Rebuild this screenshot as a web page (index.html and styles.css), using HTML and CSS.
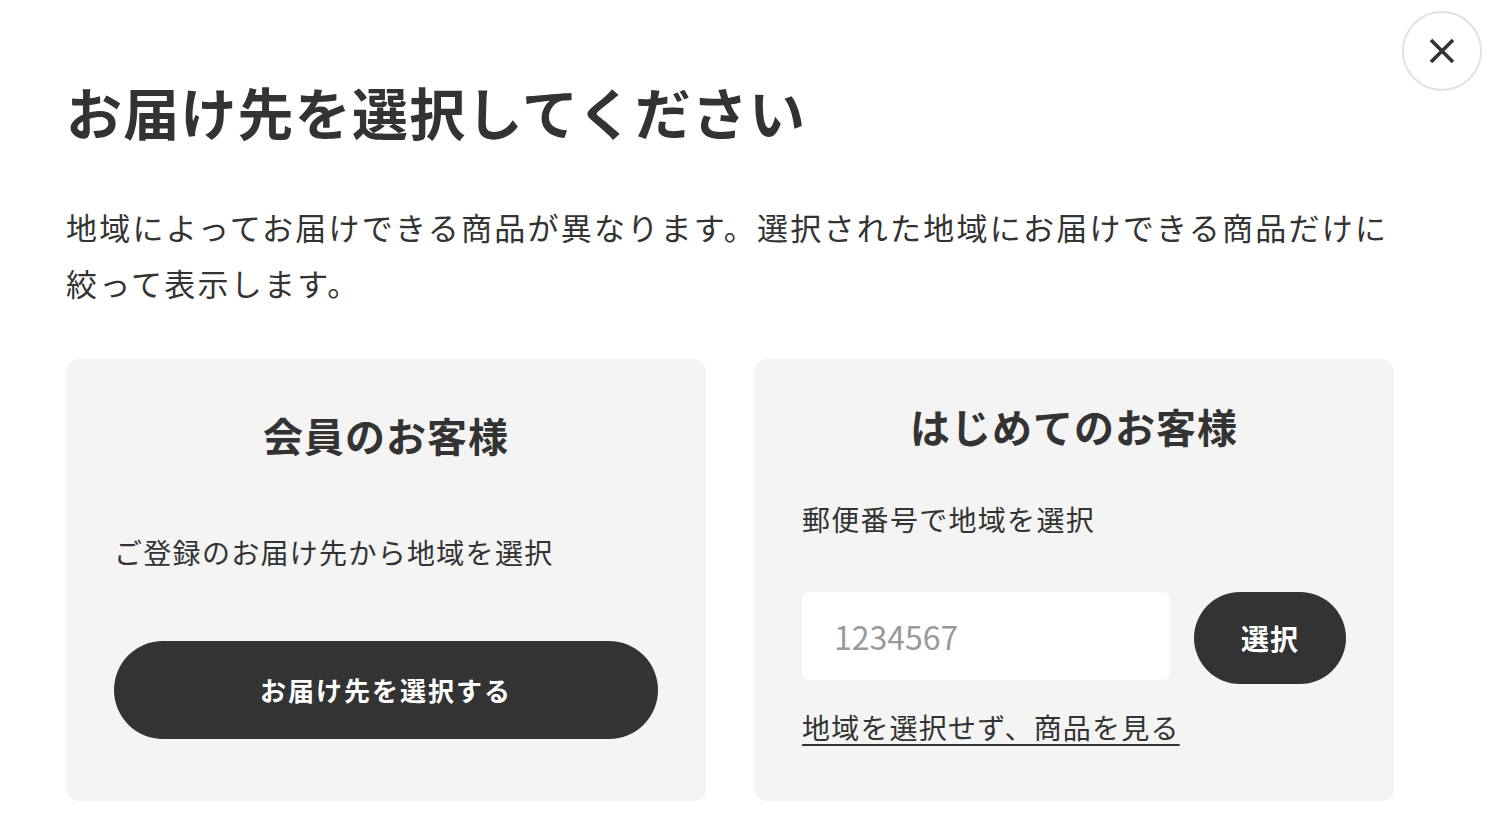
FILE: index.html
```html
<!DOCTYPE html>
<html lang="ja">
<head>
<meta charset="utf-8">
<title>お届け先を選択してください</title>
<link rel="stylesheet" href="styles.css">
</head>
<body>
<div class="modal">
  <button class="close" type="button" aria-label="閉じる">
    <svg viewBox="0 0 26 26" width="26" height="26" aria-hidden="true"><path d="M2 2L24 24M24 2L2 24" stroke="#333" stroke-width="3.6" fill="none"/></svg>
  </button>
  <h1 class="title">お届け先を選択してください</h1>
  <p class="lead">地域によってお届けできる商品が異なります。選択された地域にお届けできる商品だけに絞って表示します。</p>
  <div class="cards">
    <section class="card">
      <h2 class="card-title card-title--member">会員のお客様</h2>
      <p class="card-text card-text--member">ご登録のお届け先から地域を選択</p>
      <button class="btn-primary" type="button">お届け先を選択する</button>
    </section>
    <section class="card">
      <h2 class="card-title card-title--guest">はじめてのお客様</h2>
      <p class="card-text card-text--guest">郵便番号で地域を選択</p>
      <div class="zip-row">
        <input class="zip-input" type="text" placeholder="1234567">
        <button class="btn-select" type="button">選択</button>
      </div>
      <a class="skip-link" href="#">地域を選択せず、商品を見る</a>
    </section>
  </div>
</div>
</body>
</html>
```

FILE: styles.css
```css
html, body {
  margin: 0;
  padding: 0;
  background: #fff;
}
body {
  font-family: "Noto Sans CJK JP", "Noto Sans", sans-serif;
  color: #333;
}
.modal {
  position: relative;
  width: 1328px;
  padding: 72px 0 24px 66px;
}
.close {
  position: absolute;
  top: 11px;
  left: 1402px;
  width: 80px;
  height: 80px;
  border: 2px solid #e2e2e2;
  border-radius: 50%;
  background: #fff;
  display: flex;
  align-items: center;
  justify-content: center;
  padding: 0;
  cursor: pointer;
}
.close svg { display: block; }
.title {
  margin: 0 0 49px;
  font-size: 56px;
  line-height: 78px;
  font-weight: 700;
  letter-spacing: 1.2px;
}
.lead {
  width: 1340px;
  margin: 0 0 48px;
  font-size: 31px;
  line-height: 56px;
  letter-spacing: 2.25px;
}
.cards {
  display: grid;
  grid-template-columns: 640px 640px;
  gap: 48px;
}
.card {
  background: #f4f4f4;
  border-radius: 12px;
  padding: 43px 48px 53px;
  display: flex;
  flex-direction: column;
  justify-content: center;
}
.card-title {
  margin: 0;
  font-size: 40px;
  line-height: 48px;
  font-weight: 700;
  letter-spacing: 1px;
  text-align: center;
}
.card-title--member { margin-bottom: 72px; }
.card-title--guest { margin-bottom: 48px; }
.card-text {
  margin: 0;
  font-size: 28px;
  line-height: 42px;
  letter-spacing: 1.3px;
}
.card-text--member { margin-bottom: 68px; }
.card-text--guest { margin-bottom: 52px; }
.btn-primary {
  width: 100%;
  height: 98px;
  border: none;
  border-radius: 49px;
  background: #333;
  color: #fff;
  font-family: inherit;
  font-size: 26px;
  font-weight: 700;
  letter-spacing: 2px;
  padding: 0 0 2px;
  cursor: pointer;
}
.zip-row {
  display: flex;
  align-items: flex-start;
  gap: 24px;
  margin-bottom: 22px;
}
.zip-input {
  width: 368px;
  height: 88px;
  box-sizing: border-box;
  border: none;
  border-radius: 8px;
  background: #fff;
  padding: 0 32px;
  font-family: inherit;
  font-size: 32px;
  color: #333;
  outline: none;
}
.zip-input::placeholder { color: #9a9a9a; }
.btn-select {
  width: 152px;
  height: 92px;
  border: none;
  border-radius: 46px;
  background: #333;
  color: #fff;
  font-family: inherit;
  font-size: 28px;
  font-weight: 700;
  letter-spacing: 1px;
  cursor: pointer;
}
.skip-link {
  align-self: flex-start;
  font-size: 28px;
  line-height: 42px;
  letter-spacing: 1.2px;
  color: #333;
  text-decoration: underline;
  text-decoration-thickness: 2px;
  text-underline-offset: 5px;
}
```
